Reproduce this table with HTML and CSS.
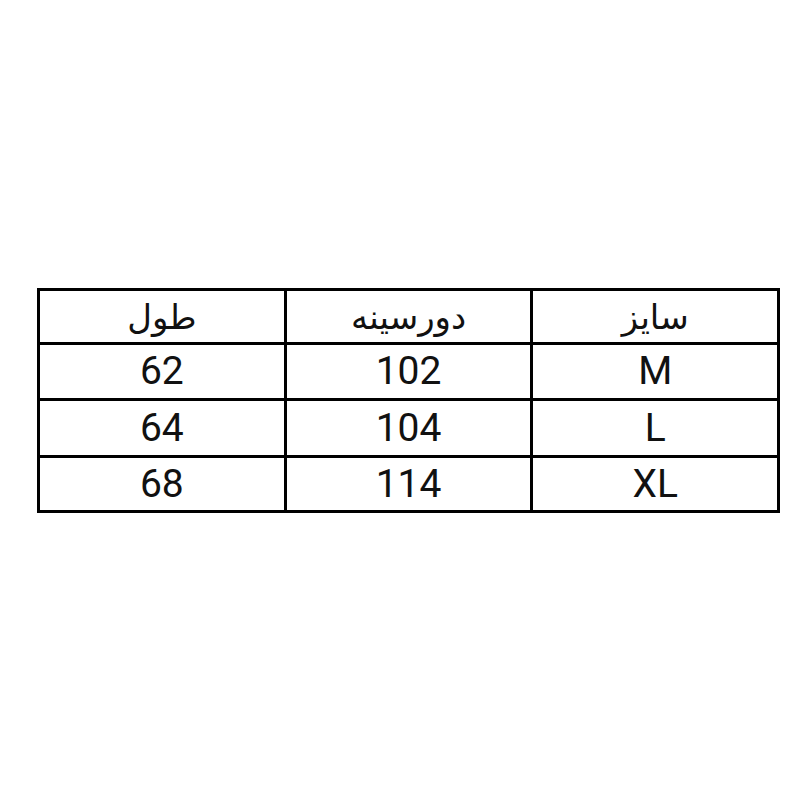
FILE: index.html
```html
<!DOCTYPE html>
<html lang="fa">
<head>
<meta charset="utf-8">
<link rel="stylesheet" href="styles.css">
</head>
<body>
<div class="page">
  <div class="table" dir="rtl">
    <div class="cell fa">سایز</div>
    <div class="cell fa">دورسینه</div>
    <div class="cell fa">طول</div>
    <div class="cell">M</div>
    <div class="cell">102</div>
    <div class="cell">62</div>
    <div class="cell">L</div>
    <div class="cell">104</div>
    <div class="cell">64</div>
    <div class="cell">XL</div>
    <div class="cell">114</div>
    <div class="cell">68</div>
  </div>
</div>
</body>
</html>
```
FILE: styles.css
```css
html, body {
  margin: 0;
  background: #fff;
}
.page {
  padding: 288px 0 0 37px;
}
.table {
  width: 743px;
  display: grid;
  grid-template-columns: repeat(3, 1fr);
  grid-template-rows: 51px 53px 54px 52px;
  gap: 3px;
  padding: 3px;
  box-sizing: border-box;
  background: #000;
}
.cell {
  background: #fff;
  display: flex;
  align-items: center;
  justify-content: center;
  font-family: Roboto, "Liberation Sans", sans-serif;
  font-size: 39px;
  color: #111;
  line-height: 1;
}
.cell.fa {
  font-family: "DejaVu Sans", sans-serif;
  font-size: 34px;
}
```
